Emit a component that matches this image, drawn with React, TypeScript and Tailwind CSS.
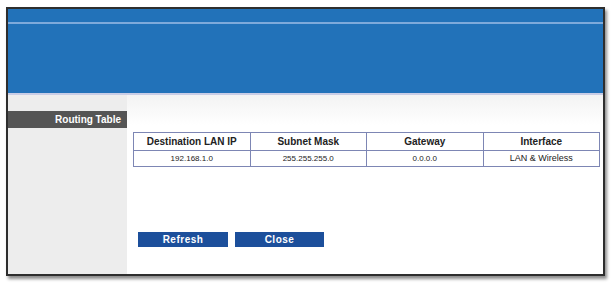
const rows = [
  { dest: "192.168.1.0", mask: "255.255.255.0", gateway: "0.0.0.0", iface: "LAN & Wireless" },
];

const headers = ["Destination LAN IP", "Subnet Mask", "Gateway", "Interface"];

function App() {
  return (
    <div className="h-[284px] w-[612px] bg-white pl-[6px] pt-[7px] font-['Liberation_Sans',Arial,sans-serif]">
      <div className="flex h-[269px] w-[599px] flex-col border-2 border-[#2e2e2e] bg-white shadow-[2px_3px_3px_rgba(0,0,0,0.45)]">
        {/* banner */}
        <div className="h-[84px] bg-[#2272b9] pt-[13px]">
          <div className="h-[2px] bg-[#7eaadb]" />
        </div>

        <div className="flex flex-1 border-t-2 border-[#c9cde6]">
          <aside className="w-[119px] bg-[#ededed] pt-[16px]">
            <div className="flex h-[17px] items-center justify-end bg-[#555555] pr-[6px] text-[10px] font-bold text-white">
              Routing Table
            </div>
          </aside>

          <main className="flex flex-1 flex-col bg-gradient-to-b from-[#f3f3f3] from-[0px] to-white to-[30px] pl-[6px] pt-[37px]">
            <table className="w-[467px] table-fixed border-collapse border border-[#7d86b4] bg-white text-[8px] text-[#222]">
              <thead>
                <tr className="h-[18px]">
                  {headers.map((h) => (
                    <th key={h} className="border border-[#7d86b4] text-[10px] font-bold">
                      {h}
                    </th>
                  ))}
                </tr>
              </thead>
              <tbody>
                {rows.map((r) => (
                  <tr key={r.dest} className="h-[16px] text-center">
                    <td className="border border-[#7d86b4]">{r.dest}</td>
                    <td className="border border-[#7d86b4]">{r.mask}</td>
                    <td className="border border-[#7d86b4]">{r.gateway}</td>
                    <td className="border border-[#7d86b4] text-[9px]">{r.iface}</td>
                  </tr>
                ))}
              </tbody>
            </table>

            <div className="ml-[5px] mt-[65px] flex gap-[7px]">
              <button
                type="button"
                className="h-[15px] w-[90px] bg-[#1c4f9b] text-[10px] font-bold tracking-[0.5px] text-white"
              >
                Refresh
              </button>
              <button
                type="button"
                className="h-[15px] w-[89px] bg-[#1c4f9b] text-[10px] font-bold tracking-[0.5px] text-white"
              >
                Close
              </button>
            </div>
          </main>
        </div>
      </div>
    </div>
  );
}

export default App;
